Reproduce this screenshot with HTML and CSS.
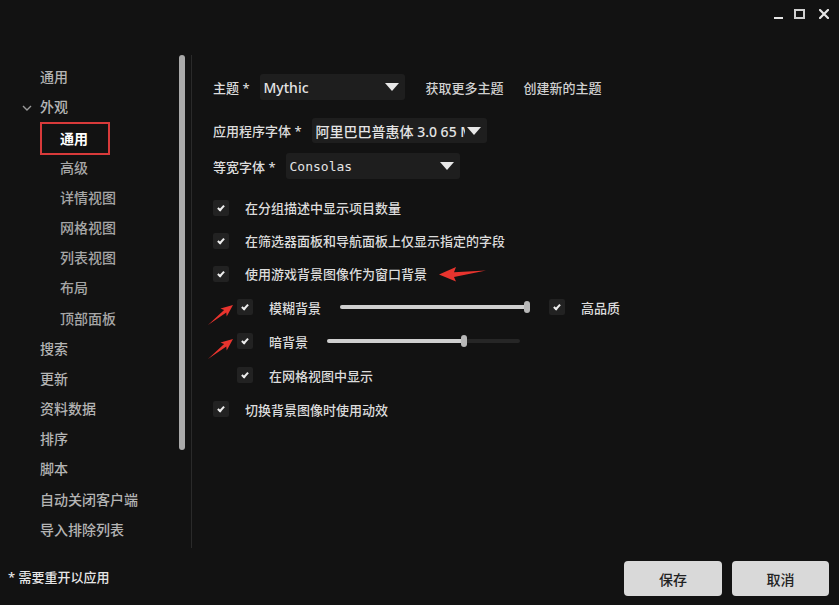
FILE: index.html
```html
<!DOCTYPE html>
<html lang="zh-CN">
<head>
    <meta charset="UTF-8">
    <meta name="viewport" content="width=device-width, initial-scale=1.0">
    <title>设置</title>
    <link rel="stylesheet" href="styles.css">
</head>
<body>
    <div class="titlebar">
        <span class="win-min"></span>
        <span class="win-max"></span>
        <svg class="win-close" width="10" height="10" viewBox="0 0 10 10">
            <path d="M1 1 L9 9 M9 1 L1 9" stroke="#e6e6e6" stroke-width="2.2" stroke-linecap="square"/>
        </svg>
    </div>

    <div class="main">
        <nav class="sidebar">
            <ul class="nav-list">
                <li>通用</li>
                <li class="group">
                    <svg class="chevron" width="10" height="6" viewBox="0 0 10 6"><path d="M1 1 L5 5 L9 1" fill="none" stroke="#9a9a9a" stroke-width="1.4"/></svg>外观
                </li>
                <li class="sub"><span class="active">通用</span></li>
                <li class="sub">高级</li>
                <li class="sub">详情视图</li>
                <li class="sub">网格视图</li>
                <li class="sub">列表视图</li>
                <li class="sub">布局</li>
                <li class="sub">顶部面板</li>
                <li>搜索</li>
                <li>更新</li>
                <li>资料数据</li>
                <li>排序</li>
                <li>脚本</li>
                <li>自动关闭客户端</li>
                <li>导入排除列表</li>
            </ul>
            <div class="scrollbar"></div>
        </nav>
        <div class="divider"></div>

        <section class="content">
            <div class="field field-theme">
                <span class="label">主题 *</span>
                <div class="select select-theme">
                    <span class="select-text">Mythic</span>
                    <span class="caret"></span>
                </div>
                <span class="link">获取更多主题</span>
                <span class="link">创建新的主题</span>
            </div>
            <div class="field field-font">
                <span class="label">应用程序字体 *</span>
                <div class="select select-font">
                    <span class="select-text">阿里巴巴普惠体 3.0 65 Medium</span>
                    <span class="caret"></span>
                </div>
            </div>
            <div class="field field-mono">
                <span class="label">等宽字体 *</span>
                <div class="select select-mono">
                    <span class="select-text mono">Consolas</span>
                    <span class="caret"></span>
                </div>
            </div>

            <div class="checks">
                <div class="check-row">
                    <span class="box"></span>
                    <span class="text">在分组描述中显示项目数量</span>
                </div>
                <div class="check-row">
                    <span class="box"></span>
                    <span class="text">在筛选器面板和导航面板上仅显示指定的字段</span>
                </div>
                <div class="check-row">
                    <span class="box"></span>
                    <span class="text">使用游戏背景图像作为窗口背景</span>
                    <svg class="arrow-left" width="48" height="16" viewBox="0 0 48 16">
                        <polygon points="0,8.5 17,1 15,6.2 47,4.5 15,11 17,15.5" fill="#e8342e"/>
                    </svg>
                </div>
                <div class="check-row tall indent">
                    <svg class="arrow-up" width="26" height="22" viewBox="0 0 26 22">
                        <polygon points="25,1 18.7,12.4 18.3,8.6 0,21 16.1,5.9 12.5,4.6" fill="#e8342e"/>
                    </svg>
                    <span class="box"></span>
                    <span class="text">模糊背景</span>
                    <div class="slider slider-blur">
                        <div class="fill" style="width: 100%"></div>
                        <span class="knob"></span>
                    </div>
                    <span class="box box-hq"></span>
                    <span class="text">高品质</span>
                </div>
                <div class="check-row tall indent">
                    <svg class="arrow-up" width="26" height="22" viewBox="0 0 26 22">
                        <polygon points="25,1 18.7,12.4 18.3,8.6 0,21 16.1,5.9 12.5,4.6" fill="#e8342e"/>
                    </svg>
                    <span class="box"></span>
                    <span class="text">暗背景</span>
                    <div class="slider slider-dark">
                        <div class="fill" style="width: 71%"></div>
                        <span class="knob"></span>
                    </div>
                </div>
                <div class="check-row tall indent">
                    <span class="box"></span>
                    <span class="text">在网格视图中显示</span>
                </div>
                <div class="check-row tall">
                    <span class="box"></span>
                    <span class="text">切换背景图像时使用动效</span>
                </div>
            </div>
        </section>
    </div>

    <footer class="footer">
        <span class="note">* 需要重开以应用</span>
        <div class="buttons">
            <button class="btn btn-save">保存</button>
            <button class="btn btn-cancel">取消</button>
        </div>
    </footer>
</body>
</html>
```

FILE: styles.css
```css
body {
    margin: 0;
    width: 839px;
    height: 605px;
    overflow: hidden;
    background-color: #121212;
    color: #dcdcdc;
    font-family: "Noto Sans", "Noto Sans CJK SC", sans-serif;
    font-size: 13px;
    font-weight: 500;
    display: flex;
    flex-direction: column;
}

/* 标题栏 */
.titlebar {
    height: 55px;
    box-sizing: border-box;
    padding: 9px 10px 0 0;
    display: flex;
    justify-content: flex-end;
    align-items: flex-start;
}
.win-min {
    width: 9px;
    height: 2px;
    margin-top: 8px;
    background-color: #e6e6e6;
}
.win-max {
    width: 11px;
    height: 10px;
    box-sizing: border-box;
    border: 2px solid #d0d0d0;
    margin-left: 11px;
}
.win-close {
    margin-left: 14px;
}

.main {
    height: 493px;
    display: flex;
}

/* 侧边栏 */
.sidebar {
    width: 191px;
    display: flex;
}
.nav-list {
    list-style: none;
    margin: 7px 0 0 0;
    padding: 0 0 0 40px;
    width: 139px;
    font-size: 14px;
    color: #b4b4b4;
}
.nav-list li {
    height: 30.2px;
    line-height: 30px;
    white-space: nowrap;
}
.nav-list .chevron {
    margin-left: -18px;
    margin-right: 8px;
    vertical-align: middle;
}
.nav-list .sub {
    padding-left: 20px;
    color: #a6a6a6;
}
.nav-list .active {
    display: inline-block;
    margin-left: -20px;
    padding: 0 20px 0 18px;
    height: 33px;
    line-height: 29px;
    box-sizing: border-box;
    border: 2px solid #d83a3a;
    color: #ffffff;
    font-weight: 700;
}
.scrollbar {
    width: 6px;
    height: 395px;
    border-radius: 3px;
    background-color: #a9a9a9;
}
.divider {
    width: 1px;
    background-color: #2a2a2a;
}

/* 内容区 */
.content {
    flex: 1;
    padding: 19px 0 0 21px;
}
.field {
    display: flex;
    align-items: center;
}
.field-font {
    margin-top: 18px;
}
.field-mono {
    margin-top: 10px;
}
.label {
    margin-right: 10px;
    white-space: nowrap;
}
.select {
    height: 26px;
    box-sizing: border-box;
    padding: 0 6px 0 4px;
    border-radius: 3px;
    background-color: #1e1e1e;
    display: flex;
    align-items: center;
    font-size: 14px;
    color: #e4e4e4;
}
.select-theme {
    width: 145px;
}
.select-font {
    width: 175px;
    height: 25px;
}
.select-mono {
    width: 174px;
}
.select-text {
    flex: 1;
    min-width: 0;
    overflow: hidden;
    white-space: nowrap;
}
.mono {
    font-family: "DejaVu Sans Mono", monospace;
    font-size: 13px;
    font-weight: 400;
}
.caret {
    width: 0;
    height: 0;
    border-left: 7px solid transparent;
    border-right: 7px solid transparent;
    border-top: 8px solid #e8e8e8;
    margin-left: 2px;
}
.link {
    margin-left: 20px;
    color: #d0d0d0;
}
.field-theme .select {
    margin-right: 1px;
}

/* 复选项 */
.checks {
    margin-top: 12px;
}
.check-row {
    position: relative;
    height: 33px;
    display: flex;
    align-items: center;
}
.check-row.tall {
    height: 34px;
}
.check-row.indent {
    padding-left: 24px;
}
.box {
    width: 16px;
    height: 16px;
    border-radius: 2px;
    background-color: #222222;
    margin-right: 16px;
    flex-shrink: 0;
    position: relative;
}
.box::after {
    content: "";
    position: absolute;
    left: 6px;
    top: 4px;
    width: 2px;
    height: 5px;
    border-right: 2px solid #eeeeee;
    border-bottom: 2px solid #eeeeee;
    transform: rotate(42deg);
}
.text {
    white-space: nowrap;
}
.arrow-left {
    margin-left: 12px;
}
.arrow-up {
    position: absolute;
    left: -5px;
    top: 14px;
}

.slider {
    position: relative;
    height: 4px;
    border-radius: 2px;
    background-color: #262626;
    margin-left: 19px;
}
.slider-blur {
    width: 189px;
}
.slider-dark {
    width: 193px;
}
.slider .fill {
    height: 100%;
    border-radius: 2px;
    background-color: #cfcfcf;
}
.slider .knob {
    position: absolute;
    top: -4px;
    width: 6px;
    height: 12px;
    border-radius: 3px;
    background-color: #b8b8b8;
}
.slider-blur .knob {
    left: 184px;
}
.slider-dark .knob {
    left: 134px;
}
.box-hq {
    margin-left: 20px;
}

/* 底部 */
.footer {
    flex: 1;
    display: flex;
    justify-content: space-between;
    align-items: center;
    padding: 0 10px 0 8px;
}
.note {
    color: #e6e6e6;
}
.buttons {
    display: flex;
    gap: 10px;
    margin-top: 4px;
}
.btn {
    height: 35px;
    border: none;
    border-radius: 4px;
    background-color: #d9d9d9;
    color: #222222;
    font-family: "Noto Sans", "Noto Sans CJK SC", sans-serif;
    font-size: 14px;
    font-weight: 500;
}
.btn-save {
    width: 98px;
}
.btn-cancel {
    width: 97px;
}
```
